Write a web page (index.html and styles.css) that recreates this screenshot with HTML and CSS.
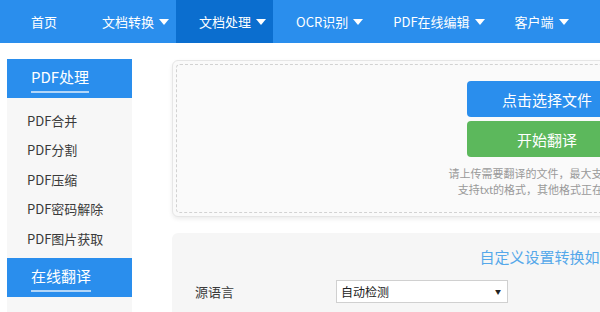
FILE: index.html
```html
<!DOCTYPE html>
<html lang="zh-CN">
<head>
<meta charset="utf-8">
<title>在线翻译</title>
<link rel="stylesheet" href="styles.css">
</head>
<body>
<nav class="nav">
  <a class="nav-item home">首页</a>
  <a class="nav-item">文档转换<span class="caret"></span></a>
  <a class="nav-item active">文档处理<span class="caret"></span></a>
  <a class="nav-item">OCR识别<span class="caret"></span></a>
  <a class="nav-item">PDF在线编辑<span class="caret"></span></a>
  <a class="nav-item">客户端<span class="caret"></span></a>
</nav>
<div class="page">
  <aside class="sidebar">
    <div class="side-head"><span class="side-title">PDF处理</span></div>
    <ul class="side-list">
      <li>PDF合并</li>
      <li>PDF分割</li>
      <li>PDF压缩</li>
      <li>PDF密码解除</li>
      <li>PDF图片获取</li>
    </ul>
    <div class="side-head"><span class="side-title">在线翻译</span></div>
    <ul class="side-list"></ul>
  </aside>
  <main class="main">
    <section class="upload">
      <div class="upload-inner">
        <button class="btn btn-blue">点击选择文件</button>
        <button class="btn btn-green">开始翻译</button>
        <p class="hint">请上传需要翻译的文件，最大支持10M，<br>支持txt的格式，其他格式正在开发中</p>
      </div>
    </section>
    <section class="settings">
      <div class="settings-title">自定义设置转换如下</div>
      <div class="row">
        <span class="label">源语言</span>
        <div class="select"><span>自动检测</span><span class="sel-arrow">▼</span></div>
      </div>
    </section>
  </main>
</div>
</body>
</html>
```
FILE: styles.css
```css
* { box-sizing: border-box; }
html, body { margin: 0; padding: 0; }
body {
  width: 600px;
  height: 312px;
  overflow: hidden;
  background: #fff;
  font-family: "Noto Sans CJK SC", "Noto Sans", sans-serif;
  color: #333;
}
.nav {
  display: flex;
  height: 43px;
  padding-left: 8px;
  background: #2a8eed;
}
.nav-item {
  display: flex;
  align-items: center;
  gap: 5px;
  padding: 0 7px 0 23px;
  color: #fff;
  font-size: 13px;
  white-space: nowrap;
}
.nav-item.home { padding-right: 22px; }
.nav-item.active { background: #0b6ecf; }
.caret {
  width: 0;
  height: 0;
  border-left: 5px solid transparent;
  border-right: 5px solid transparent;
  border-top: 6px solid #fff;
}
.page {
  display: flex;
  align-items: flex-start;
}
.sidebar {
  flex: 0 0 125px;
  margin: 16px 0 0 7px;
  background: #f7f7f7;
  height: 260px;
}
.side-head {
  height: 39px;
  padding: 5px 0 0 24px;
  background: #2a8eed;
}
.side-title {
  display: inline-block;
  line-height: 22px;
  padding-bottom: 3px;
  border-bottom: 2px solid #b3d6f8;
  color: #fff;
  font-size: 15px;
}
.side-list {
  list-style: none;
  margin: 0;
  padding: 8px 0 5px 20px;
}
.side-list li {
  line-height: 29.4px;
  font-size: 13px;
  color: #3a3a3a;
}
.main {
  flex: 0 0 750px;
  margin: 17px 0 0 40px;
}
.upload {
  height: 157px;
  padding: 3px;
  border: 1px solid #e6e6e6;
  border-radius: 6px;
  background: #fafafa;
  box-shadow: 0 2px 4px rgba(0,0,0,0.08);
}
.upload-inner {
  height: 100%;
  border: 1px dashed #d2d2d2;
  border-radius: 4px;
  display: flex;
  flex-direction: column;
  align-items: center;
  padding-top: 16px;
}
.btn {
  width: 160px;
  height: 36px;
  border: 0;
  border-radius: 4px;
  color: #fff;
  font-family: inherit;
  font-size: 15px;
  padding: 0;
}
.btn-blue { background: #2a8eed; }
.btn-green { background: #5cb85c; margin-top: 4px; }
.hint {
  margin: 8px 0 0;
  font-size: 11px;
  line-height: 16px;
  color: #999;
  text-align: center;
}
.settings {
  margin-top: 16px;
  height: 120px;
  padding: 13px 0 0 0;
  border-radius: 6px;
  background: #f6f6f6;
}
.settings-title {
  text-align: center;
  font-size: 15px;
  line-height: 22px;
  color: #55a8ea;
}
.row {
  display: flex;
  align-items: center;
  margin-top: 12px;
  padding-left: 23px;
}
.label {
  width: 141px;
  font-size: 13px;
  color: #3a3a3a;
}
.select {
  width: 172px;
  height: 23px;
  display: flex;
  align-items: center;
  justify-content: space-between;
  padding: 0 6px 0 4px;
  border: 1px solid #d0d0d0;
  background: #fff;
  font-size: 12px;
  color: #222;
}
.sel-arrow { font-size: 6px; }
```
